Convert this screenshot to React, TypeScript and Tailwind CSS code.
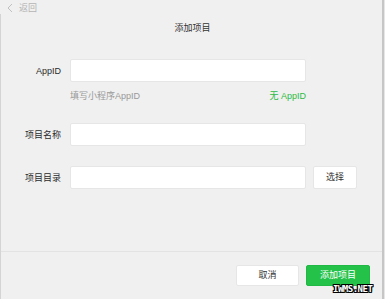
import React from "react";

const font = "font-['Helvetica','Liberation_Sans','Noto_Sans_CJK_SC',sans-serif]";

const Field = ({ label, children }: { label: string; children: React.ReactNode }) => (
  <div className="flex items-center">
    <div className="w-[61px] text-right text-[9px] leading-[12px] text-[#2a2a2a]">{label}</div>
    <div className="ml-[9px] flex items-center">{children}</div>
  </div>
);

const Input = () => (
  <div className="w-[236px] h-[23px] bg-white border border-[#e6e6e6] rounded-[2px]" />
);

export default function App() {
  return (
    <div className={`relative w-[385px] h-[299px] bg-[#f0f0f0] flex flex-col overflow-hidden ${font}`}>
      <div className="flex h-full">
        <div className="flex flex-col w-[382px] h-full">
          {/* top bar */}
          <div className="h-[14px] flex items-end pl-[7px] text-[#b4b4b4]">
            <svg width="6" height="10" viewBox="0 0 6 10" className="mr-[6px] mb-[1px]">
              <path d="M5 1 L1 5 L5 9" fill="none" stroke="#c0c0c0" strokeWidth="1" />
            </svg>
            <span className="text-[9px] leading-[12px]">返回</span>
          </div>

          <div className="flex-1 flex flex-col border-l border-[#d4d4d4]">
            <div className="pt-[7px] text-center text-[9px] leading-[14px] text-[#333] pl-[2px]">添加项目</div>

            <div className="mt-[24px] -ml-px">
              <Field label="AppID">
                <Input />
              </Field>
              <div className="flex justify-between w-[236px] ml-[70px] mt-[8px] text-[9px] leading-[12px]">
                <span className="text-[#999]">填写小程序AppID</span>
                <span className="text-[#2cba45]">无 AppID</span>
              </div>
              <div className="mt-[21px]">
                <Field label="项目名称">
                  <Input />
                </Field>
              </div>
              <div className="mt-[20px]">
                <Field label="项目目录">
                  <Input />
                  <button className="ml-[7px] w-[44px] h-[23px] bg-white border border-[#e6e6e6] rounded-[2px] text-[9px] text-[#333]">
                    选择
                  </button>
                </Field>
              </div>
            </div>

            <div className="mt-auto border-t border-[#e3e3e3] h-[48px] flex justify-end items-start pt-[13px] pr-[12px] gap-[7px]">
              <button className="w-[63px] h-[21px] bg-white border border-[#e6e6e6] rounded-[2px] text-[9px] text-[#333]">
                取消
              </button>
              <button className="w-[64px] h-[21px] bg-[#25c24a] border border-[#22b845] rounded-[2px] text-[9px] text-white">
                添加项目
              </button>
            </div>
          </div>
        </div>
        <div className="w-[2px] h-full bg-[#c6c6c6]" />
        <div className="w-[1px] h-full bg-[#e6e6e6]" />
      </div>

      <div className="absolute left-[333px] top-[284px] text-[9px] leading-[10px] font-bold text-white font-['DejaVu_Sans_Mono',monospace] tracking-[-0.5px] [text-shadow:1px_0_#000,-1px_0_#000,0_1px_#000,0_-1px_#000,1px_1px_#000,-1px_-1px_#000,1px_-1px_#000,-1px_1px_#000]">
        IWMS.NET
      </div>
    </div>
  );
}
